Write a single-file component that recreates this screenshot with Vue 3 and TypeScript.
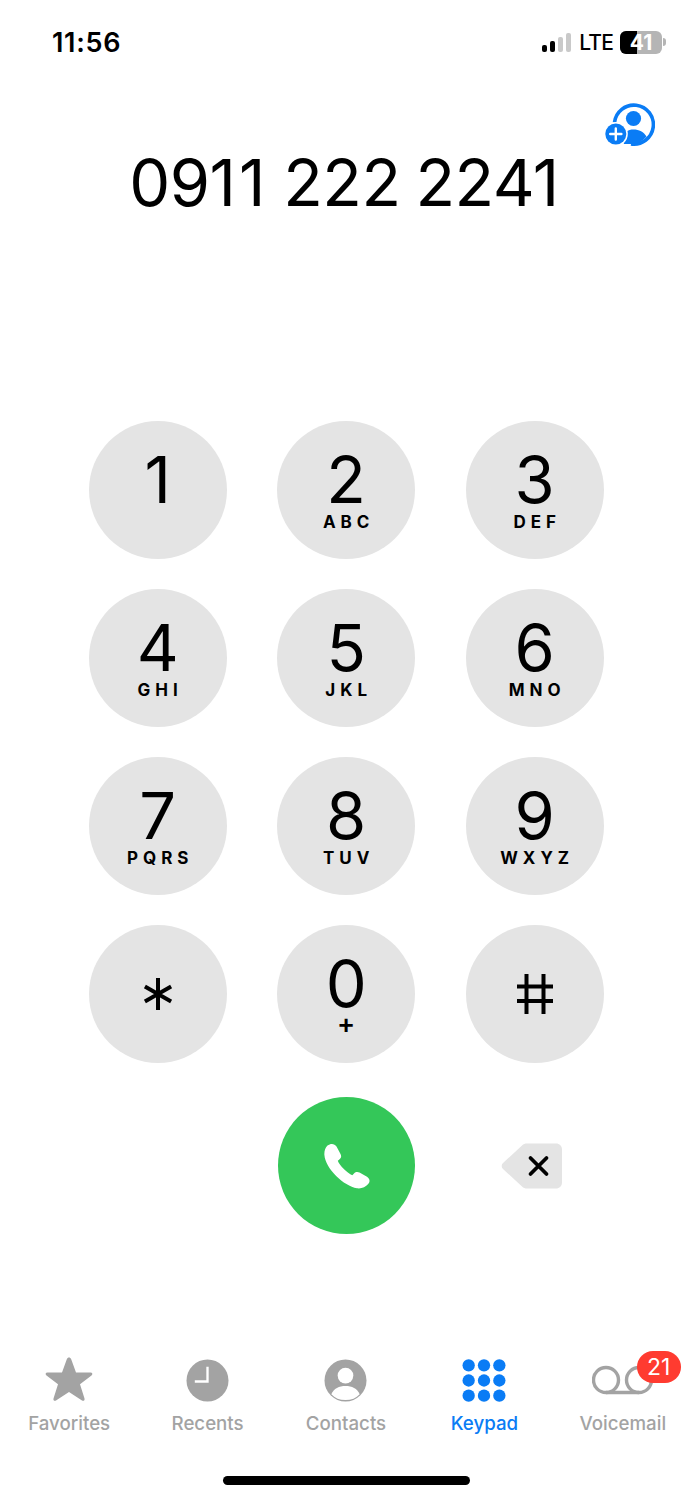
<script setup lang="ts">
type Key = { digit: string; letters: string };
type Tab = { name: string; active?: boolean };

const keys: Key[] = [
  { digit: '1', letters: '' },
  { digit: '2', letters: 'ABC' },
  { digit: '3', letters: 'DEF' },
  { digit: '4', letters: 'GHI' },
  { digit: '5', letters: 'JKL' },
  { digit: '6', letters: 'MNO' },
  { digit: '7', letters: 'PQRS' },
  { digit: '8', letters: 'TUV' },
  { digit: '9', letters: 'WXYZ' },
];

const tabs: Tab[] = [
  { name: 'Favorites' },
  { name: 'Recents' },
  { name: 'Contacts' },
  { name: 'Keypad', active: true },
  { name: 'Voicemail' },
];
</script>

<template>
  <div class="phone">
    <header class="status">
      <span class="time">11:56</span>
      <div class="status-right">
        <div class="signal">
          <i class="on h1"></i><i class="on h2"></i><i class="h3"></i><i class="h4"></i>
        </div>
        <span class="lte">LTE</span>
        <div class="battery"><b></b><span>41</span></div>
        <i class="nub"></i>
      </div>
    </header>

    <div class="add-row">
      <svg width="50" height="43" viewBox="0 0 50 43">
        <path d="M9.5 19.5A19.5 19.5 0 1 1 26 40.9" fill="none" stroke="#0a7cf5" stroke-width="3.6" />
        <circle cx="28.5" cy="15.5" r="7.6" fill="#0a7cf5" />
        <path d="M17 37.5C18.5 29 23 26.5 28.5 26.5S39 29 41.5 33.5C37.5 38.5 32 41 27 41H18.5C20 39.5 18.5 38 17 37.5Z" fill="#0a7cf5" />
        <circle cx="10.8" cy="31" r="12" fill="#fff" />
        <circle cx="10.8" cy="31" r="10.5" fill="#0a7cf5" />
        <path d="M10.8 25.4V36.6M5.2 31H16.4" stroke="#fff" stroke-width="2.4" stroke-linecap="round" />
      </svg>
    </div>

    <h1 class="number">09<span class="ones">11</span> 222 2241</h1>

    <div class="keypad">
      <button v-for="key in keys" :key="key.digit" class="key dial">
        <span class="digit">{{ key.digit }}</span>
        <span v-if="key.letters" class="letters">{{ key.letters }}</span>
      </button>
      <button class="key">
        <svg width="32" height="32" viewBox="0 0 32 32">
          <path d="M16 0V32M2.900 8.500 29.100 23.500M29.100 8.500 2.900 23.500" stroke="#000" stroke-width="4" />
        </svg>
      </button>
      <button class="key dial">
        <span class="digit">0</span>
        <span class="letters plus">+</span>
      </button>
      <button class="key">
        <svg width="36" height="40" viewBox="0 0 36 40">
          <path d="M9.500 0V40M26.500 0V40M0 12.500H36M0 27H36" stroke="#000" stroke-width="4" />
        </svg>
      </button>
      <div></div>
      <button class="key call">
        <svg width="46" height="46" viewBox="0 0 46 46">
          <path d="M3.500 2.500C6.500 .2 10.500 .2 12.500 3.500L16.500 11C17.800 13.500 17 15.200 15.300 16.500L13.800 17.700C15.500 22.500 23.500 30.300 28.300 32.200L30 30.400C31.500 28.900 33.500 28.500 35.500 29.500L43 33.800C46 35.800 46.300 39 44.200 41C41.500 44 37.500 46 33 45.300C20 43 1.500 26 .4 12C.1 8.500 1 5 3.500 2.500Z" fill="#fff" />
        </svg>
      </button>
      <div class="delete">
        <svg width="62" height="46" viewBox="0 0 62 46">
          <path d="M21 2.500C22.500 1 24 .5 26 .5H55C58.500 .5 61 3 61 6.500V39.500C61 43 58.500 45.500 55 45.500H26C24 45.500 22.500 45 21 43.500L2 26C.3 24.500 .3 21.500 2 20Z" fill="#e4e4e4" />
          <path d="M29.500 15 45.500 31M45.500 15 29.500 31" stroke="#000" stroke-width="3.800" stroke-linecap="round" />
        </svg>
      </div>
    </div>

    <nav class="tabs">
      <div v-for="tab in tabs" :key="tab.name" class="tab" :class="{ active: tab.active }">
        <div class="tab-icon">
          <svg v-if="tab.name === 'Favorites'" width="48" height="46" viewBox="0 0 48 46">
            <path d="M24 1.500C25 1.500 25.700 2 26.200 3.200L31 16.500H45.500C47.500 16.500 48 18.300 46.500 19.500L35 28.300 39.500 42.500C40 44.300 38.500 45.500 37 44.500L24 36 11 44.500C9.500 45.500 8 44.300 8.500 42.500L13 28.300 1.500 19.500C0 18.300.5 16.500 2.500 16.500H17L21.800 3.200C22.300 2 23 1.500 24 1.500Z" fill="#a3a3a3" />
          </svg>
          <svg v-else-if="tab.name === 'Recents'" class="round" width="43" height="43" viewBox="0 0 44 44">
            <circle cx="22" cy="22" r="21.500" fill="#a3a3a3" />
            <path d="M22 8V23H9" fill="none" stroke="#fff" stroke-width="2.400" />
          </svg>
          <svg v-else-if="tab.name === 'Contacts'" class="round" width="43" height="43" viewBox="0 0 44 44">
            <circle cx="22" cy="22" r="21.500" fill="#a3a3a3" />
            <circle cx="22" cy="17" r="8" fill="#fff" />
            <path d="M7.500 36C10 30 15.500 27.500 22 27.500S34 30 36.500 36C33 40 28 42 22 42S11 40 7.500 36Z" fill="#fff" />
          </svg>
          <svg v-else-if="tab.name === 'Keypad'" class="round" width="44" height="43" viewBox="0 0 44 44">
            <g fill="#0a7cf5">
              <circle cx="6.300" cy="6.500" r="6.300" /><circle cx="22" cy="6.500" r="6.300" /><circle cx="37.700" cy="6.500" r="6.300" />
              <circle cx="6.300" cy="22" r="6.300" /><circle cx="22" cy="22" r="6.300" /><circle cx="37.700" cy="22" r="6.300" />
              <circle cx="6.300" cy="37.500" r="6.300" /><circle cx="22" cy="37.500" r="6.300" /><circle cx="37.700" cy="37.500" r="6.300" />
            </g>
          </svg>
          <svg v-else class="vm" width="62" height="30" viewBox="0 0 62 30">
            <circle cx="14" cy="15" r="12.500" fill="none" stroke="#a3a3a3" stroke-width="3.400" />
            <circle cx="47" cy="15" r="12.500" fill="none" stroke="#a3a3a3" stroke-width="3.400" />
            <path d="M14 27.500H47" stroke="#a3a3a3" stroke-width="3.400" />
          </svg>
          <span v-if="tab.name === 'Voicemail'" class="badge">21</span>
        </div>
        <span class="tab-label">{{ tab.name }}</span>
      </div>
    </nav>

    <div class="home-bar"></div>
  </div>
</template>

<style scoped>
.phone {
  width: 692px;
  height: 1500px;
  background: #fff;
  display: flex;
  flex-direction: column;
  font-family: Inter, "Liberation Sans", sans-serif;
  color: #000;
  overflow: hidden;
}

.status {
  display: flex;
  justify-content: space-between;
  align-items: center;
  height: 24px;
  margin-top: 30px;
  padding: 0 26px 0 52px;
}
.time {
  font-size: 27px;
  font-weight: 600;
  letter-spacing: 0.700px;
}
.status-right {
  display: flex;
  align-items: center;
}
.signal {
  display: flex;
  align-items: flex-end;
  gap: 2.500px;
  height: 19px;
  margin-right: 8px;
}
.signal i {
  width: 5.500px;
  border-radius: 2px;
  background: #c9c9c9;
}
.signal i.on {
  background: #000;
}
.signal .h1 { height: 7px; }
.signal .h2 { height: 11px; }
.signal .h3 { height: 15px; }
.signal .h4 { height: 19px; }
.lte {
  font-size: 21px;
  font-weight: 500;
  letter-spacing: -0.800px;
  margin-right: 7px;
}
.battery {
  position: relative;
  width: 42px;
  height: 23px;
  border-radius: 6px;
  background: #b5b5b5;
  overflow: hidden;
  display: flex;
  align-items: center;
  justify-content: center;
}
.battery b {
  position: absolute;
  left: 0;
  top: 0;
  bottom: 0;
  width: 17px;
  background: #000;
}
.battery span {
  position: relative;
  color: #fff;
  font-size: 21px;
  font-weight: 700;
}
.nub {
  width: 3px;
  height: 8px;
  margin-left: 1px;
  border-radius: 0 3px 3px 0;
  background: #b5b5b5;
}

.add-row {
  display: flex;
  justify-content: flex-end;
  height: 43px;
  margin-top: 49px;
  padding-right: 37px;
}

.number {
  margin: -3px 4px 0 0;
  text-align: center;
  font-size: 65px;
  line-height: 80px;
  font-weight: 400;
  letter-spacing: -0.500px;
  word-spacing: -3px;
}
.ones {
  letter-spacing: 3px;
}

.keypad {
  display: grid;
  grid-template-columns: repeat(3, 138px);
  grid-auto-rows: 138px;
  column-gap: 50.500px;
  row-gap: 30px;
  justify-content: start;
  margin-top: 198px;
  padding-left: 88.700px;
}
.key {
  display: flex;
  flex-direction: column;
  align-items: center;
  justify-content: center;
  width: 138px;
  height: 138px;
  padding: 0;
  border: 0;
  border-radius: 50%;
  background: #e4e4e4;
  color: #000;
  font-family: inherit;
}
.key.dial {
  justify-content: flex-start;
  padding-top: 26px;
}
.digit {
  font-size: 65px;
  line-height: 65px;
}
.letters {
  font-size: 17px;
  line-height: 20px;
  font-weight: 700;
  letter-spacing: 5px;
  margin-right: -5px;
}
.letters.plus {
  font-size: 27px;
  font-weight: 600;
  margin-top: -2px;
}
.call {
  background: #34c759;
  width: 137px;
  height: 137px;
  margin: 4px 0 0 1px;
}
.delete {
  display: flex;
  align-items: center;
  justify-content: center;
  margin-top: 8px;
  padding-right: 5px;
}

.tabs {
  display: grid;
  grid-template-columns: repeat(5, 1fr);
  margin-top: 124px;
}
.tab {
  display: flex;
  flex-direction: column;
  align-items: center;
}
.tab-icon {
  position: relative;
  display: flex;
  align-items: center;
  justify-content: center;
  height: 48px;
}
.tab-label {
  margin-top: 10px;
  font-size: 18.700px;
  line-height: 22px;
  font-weight: 500;
  color: #a3a3a3;
}
.tab.active .tab-label {
  color: #0a7cf5;
}
.round {
  margin-top: 2px;
}
.vm {
  margin-top: 2px;
}
.badge {
  position: absolute;
  left: 45px;
  top: -4px;
  min-width: 44px;
  height: 32px;
  border-radius: 16px;
  background: #ff3b30;
  color: #fff;
  font-size: 23px;
  line-height: 32px;
  text-align: center;
}

.home-bar {
  width: 247px;
  height: 9px;
  border-radius: 5px;
  background: #000;
  margin: 41px 0 0 223px;
}
</style>
